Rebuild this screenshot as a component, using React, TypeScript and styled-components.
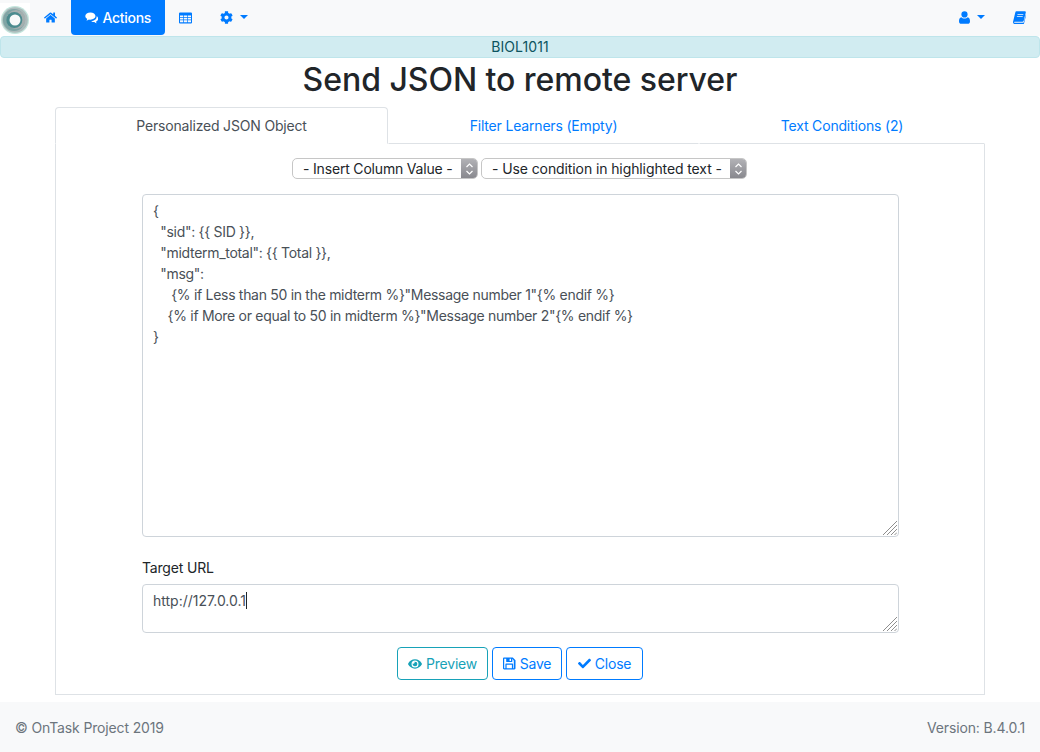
import styled, { createGlobalStyle } from 'styled-components';
import { FaHome, FaCog, FaEye, FaCheck } from 'react-icons/fa';

const JSON_TEXT = `{
  "sid": {{ SID }},
  "midterm_total": {{ Total }},
  "msg":
     {% if Less than 50 in the midterm %}"Message number 1"{% endif %}
    {% if More or equal to 50 in midterm %}"Message number 2"{% endif %}
}`;

const GlobalStyle = createGlobalStyle`
  * { box-sizing: border-box; }
  html, body { margin: 0; padding: 0; background: #fff; }
  body {
    font-family: Inter, "Liberation Sans", sans-serif;
    font-size: 14px;
    letter-spacing: -0.18px;
    color: #212529;
    width: 1040px;
    height: 752px;
    overflow: hidden;
  }
`;

const Logo = () => (
  <LogoBox>
    <svg width="30" height="30" viewBox="0 0 30 30">
      <circle cx="15" cy="15" r="14" fill="#c4e5dd" />
      <circle cx="15" cy="15" r="12.800" fill="#adbcbc" />
      <circle cx="14" cy="15" r="11" fill="#7fa5a5" />
      <circle cx="16" cy="14.500" r="9.500" fill="#a5afaf" />
      <circle cx="14.300" cy="15" r="8" fill="#4a8b8e" />
      <circle cx="15" cy="15" r="5.500" fill="#f7f9f9" />
    </svg>
  </LogoBox>
);

const CommentsIcon = () => (
  <svg width="14" height="13" viewBox="0 0 14 13" fill="currentColor">
    <path d="M5.600 1.200C2.600 1.200.3 2.900.3 5c0 1.200.8 2.300 2 3-.2.7-.6 1.300-1 1.700 1 0 2-.5 2.800-1.100.5.1 1 .2 1.500.2 3 0 5.300-1.700 5.300-3.800S8.600 1.200 5.600 1.200z" />
    <path d="M12 4.800c.1.300.1.500.1.800 0 2.500-2.600 4.400-5.700 4.500.9.900 2.200 1.200 3.300 1.200.4.500 1.400 1 2.400 1.100-.3-.4-.6-.9-.7-1.500 1.600-.9 2.300-1.900 2.300-3.100 0-1.200-.7-2.200-1.700-2.800z" />
  </svg>
);

const TableIcon = () => (
  <svg width="13" height="12" viewBox="0 0 13 12" fill="currentColor">
    <path
      fillRule="evenodd"
      d="M1 .5h11a1 1 0 0 1 1 1v9a1 1 0 0 1-1 1H1a1 1 0 0 1-1-1v-9a1 1 0 0 1 1-1zM1 3.500v1.700h3.200V3.500zM4.900 3.500v1.700h3.200V3.500zM8.800 3.500v1.700H12V3.500zM1 5.900v1.700h3.200V5.900zM4.900 5.900v1.700h3.200V5.900zM8.800 5.900v1.700H12V5.900zM1 8.300v1.900h3.200V8.300zM4.900 8.300v1.900h3.200V8.300zM8.800 8.300v1.900H12V8.300z"
    />
  </svg>
);

const UserIcon = () => (
  <svg width="11" height="13" viewBox="0 0 11 13" fill="currentColor">
    <circle cx="5.500" cy="3.400" r="3.100" />
    <path d="M2.300 6.200C3 7 4.200 7.500 5.500 7.500s2.500-.5 3.200-1.300C10.200 6.500 11 7.800 11 10.200 11 12 10 12.800 8.800 12.800H2.200C1 12.800 0 12 0 10.200 0 7.800.8 6.500 2.300 6.200z" />
  </svg>
);

const BookIcon = () => (
  <svg width="13" height="13" viewBox="0 0 13 13" fill="currentColor">
    <path
      fillRule="evenodd"
      d="M3.400.3h8.500c.8 0 1.100.6.900 1.300l-2.100 8.200c-.2.7-.7 1-1.400 1H1.600c-.4 0-.6.200-.6.400 0 .3.300.5.700.5h8.500c.3 0 .5-.1.600-.4l2-7.700c.2.2.3.5.2.9l-2 7.900c-.1.5-.6 1-1.200 1H1.800C.8 13 0 12.200 0 11.200c0-.2 0-.4.100-.6L2.300 1.400C2.500.7 2.800.3 3.400.3zM4.600 3l-.2.8h5.800l.2-.8zM4 5.200l-.2.8h5.800l.2-.8z"
    />
  </svg>
);

const SaveIcon = () => (
  <svg width="13" height="13" viewBox="0 0 13 13" fill="currentColor">
    <path
      fillRule="evenodd"
      d="M1.200.5h8.600L12.500 3.200v8.100c0 .7-.5 1.200-1.200 1.200H1.200C.5 12.500 0 12 0 11.300V1.700C0 1 .5.500 1.200.5zM1.200 1.700v9.600h1.200V7.200c0-.4.200-.6.600-.6h6.500c.4 0 .6.200.6.600v4.100h.7V3.700L9.300 1.700V4.500c0 .4-.2.600-.6.600H3.800c-.4 0-.6-.2-.6-.6V1.700zM3.600 7.800v3.500h5.300V7.800zM6.600 1.800v2.300h1.400V1.800z"
    />
  </svg>
);

const Stepper = () => (
  <StepperBox>
    <svg width="9" height="14" viewBox="0 0 9 14" fill="none" stroke="#fff" strokeWidth="1.200">
      <path d="M1.500 5 L4.500 2 L7.500 5" />
      <path d="M1.500 9 L4.500 12 L7.500 9" />
    </svg>
  </StepperBox>
);

const Grip = () => (
  <GripMark>
    <svg width="14" height="14" viewBox="0 0 14 14" stroke="#8e8e8e" strokeWidth="1">
      <path d="M0 14 L14 0" />
      <path d="M4 14 L14 4" />
      <path d="M8 14 L14 8" />
      <path d="M11.500 14 L14 11.500" />
    </svg>
  </GripMark>
);

export default function App() {
  return (
    <Page>
      <GlobalStyle />
      <Navbar>
        <Logo />
        <NavLink><FaHome size={13} /></NavLink>
        <ActiveLink><CommentsIcon /> Actions</ActiveLink>
        <NavLink><TableIcon /></NavLink>
        <NavLink><FaCog size={13} /><Caret /></NavLink>
        <NavSpacer />
        <NavLink><UserIcon /><Caret /></NavLink>
        <NavLink><BookIcon /></NavLink>
      </Navbar>
      <Banner>BIOL1011</Banner>
      <Title>Send JSON to remote server</Title>
      <Content>
        <Tabs>
          <Tab $active>Personalized JSON Object</Tab>
          <Tab>Filter Learners (Empty)</Tab>
          <Tab>Text Conditions (2)</Tab>
        </Tabs>
        <Panel>
          <SelectRow>
            <Select>- Insert Column Value -<Stepper /></Select>
            <WideSelect>- Use condition in highlighted text -<Stepper /></WideSelect>
          </SelectRow>
          <TextBox $height={343}>
            <JsonArea readOnly value={JSON_TEXT} />
            <Grip />
          </TextBox>
          <FieldLabel>Target URL</FieldLabel>
          <TextBox $height={49}>
            <UrlArea readOnly value="http://127.0.0.1" />
            <TextCursor />
            <Grip />
          </TextBox>
          <Buttons>
            <OutlineButton $color="#17a2b8" $width={91}><FaEye size={14} /> Preview</OutlineButton>
            <OutlineButton $color="#007bff" $width={70}><SaveIcon /> Save</OutlineButton>
            <OutlineButton $color="#007bff" $width={77}><FaCheck size={13} /> Close</OutlineButton>
          </Buttons>
        </Panel>
      </Content>
      <Footer>
        <span>© OnTask Project 2019</span>
        <span>Version: B.4.0.1</span>
      </Footer>
    </Page>
  );
}

const Page = styled.div`
  display: flex;
  flex-direction: column;
  height: 752px;
`;

const Navbar = styled.nav`
  display: flex;
  align-items: stretch;
  height: 36px;
  background: #f8f9fa;
`;

const LogoBox = styled.div`
  width: 30px;
  height: 33px;
  background: #fff;
  display: flex;
  align-items: center;
  justify-content: center;
  margin-top: 3px;
`;

const NavLink = styled.a`
  display: flex;
  align-items: center;
  gap: 4px;
  padding: 0 14px;
  height: 35px;
  font-size: 14px;
  font-weight: 500;
  letter-spacing: -0.3px;
  color: #007bff;
  border-radius: 0 0 4px 4px;
`;

const ActiveLink = styled(NavLink)`
  width: 94px;
  color: #fff;
  background: #007bff;
`;

const Caret = styled.span`
  width: 0;
  height: 0;
  margin-left: 3px;
  margin-top: -2px;
  border-top: 4px solid #007bff;
  border-left: 4px solid transparent;
  border-right: 4px solid transparent;
`;

const NavSpacer = styled.div`
  flex: 1;
`;

const Banner = styled.div`
  height: 22px;
  background: #d1ecf1;
  border: 1px solid #bee5eb;
  border-radius: 4px;
  color: #0c5460;
  text-align: center;
  font-size: 14px;
  letter-spacing: 0.1px;
  line-height: 20px;
`;

const Title = styled.h1`
  margin: 0;
  height: 49px;
  font-size: 32px;
  letter-spacing: -0.04px;
  line-height: 44px;
  font-weight: 500;
  text-align: center;
  color: #212529;
`;

const Content = styled.div`
  margin: 0 55px;
  display: flex;
  flex-direction: column;
`;

const Tabs = styled.div`
  display: grid;
  grid-template-columns: 333px 311px 1fr;
  height: 37px;
`;

const Tab = styled.div<{ $active?: boolean }>`
  display: flex;
  align-items: center;
  justify-content: center;
  font-size: 14px;
  color: ${({ $active }) => ($active ? '#495057' : '#007bff')};
  border: 1px solid ${({ $active }) => ($active ? '#dee2e6' : 'transparent')};
  border-bottom: 1px solid ${({ $active }) => ($active ? '#fff' : '#dee2e6')};
  border-radius: 4px 4px 0 0;
`;

const Panel = styled.div`
  height: 551px;
  border: 1px solid #dee2e6;
  border-top: none;
  padding: 14px 85px 0 86px;
  display: flex;
  flex-direction: column;
  align-items: stretch;
`;

const SelectRow = styled.div`
  display: flex;
  justify-content: center;
  gap: 3px;
  height: 21px;
  margin: 0 2px 15px 0;
`;

const Select = styled.div`
  display: flex;
  align-items: center;
  justify-content: space-between;
  width: 186px;
  height: 21px;
  padding-left: 10px;
  font-size: 14px;
  color: #212529;
  background: #fff;
  border: 1px solid #c6c6c6;
  border-radius: 5px;
  overflow: hidden;
`;

const WideSelect = styled(Select)`
  width: 266px;
  letter-spacing: -0.1px;
`;

const StepperBox = styled.div`
  width: 16px;
  height: 21px;
  display: flex;
  align-items: center;
  justify-content: center;
  background: linear-gradient(#b4b4b8, #86868c);
`;

const TextBox = styled.div<{ $height: number }>`
  position: relative;
  height: ${({ $height }) => $height}px;
`;

const JsonArea = styled.textarea`
  display: block;
  width: 100%;
  height: 100%;
  padding: 5px 10px;
  font-family: inherit;
  font-size: 14px;
  letter-spacing: -0.3px;
  line-height: 21px;
  color: #495057;
  background: #fff;
  border: 1px solid #ced4da;
  border-radius: 4px;
  outline: none;
  resize: none;
`;

const UrlArea = styled(JsonArea)`
  letter-spacing: 0;
`;

const GripMark = styled.span`
  position: absolute;
  right: 2px;
  bottom: 2px;
  width: 14px;
  height: 14px;
  line-height: 0;
`;

const FieldLabel = styled.label`
  display: block;
  margin-top: 21px;
  height: 26px;
  font-size: 14px;
  line-height: 20px;
  color: #212529;
`;

const TextCursor = styled.span`
  position: absolute;
  left: 104px;
  top: 8px;
  width: 1px;
  height: 17px;
  background: #212529;
`;

const Buttons = styled.div`
  display: flex;
  justify-content: center;
  gap: 4px;
  margin: 14px 1px 0 0;
`;

const OutlineButton = styled.button<{ $color: string; $width: number }>`
  display: inline-flex;
  align-items: center;
  justify-content: center;
  gap: 4px;
  width: ${({ $width }) => $width}px;
  height: 33px;
  padding: 0;
  font-family: inherit;
  font-size: 14px;
  letter-spacing: inherit;
  color: ${({ $color }) => $color};
  background: #fff;
  border: 1px solid ${({ $color }) => $color};
  border-radius: 4px;
`;

const Footer = styled.footer`
  margin-top: 7px;
  flex: 1;
  display: flex;
  align-items: center;
  justify-content: space-between;
  padding: 0 15px;
  background: #f8f9fa;
  font-size: 14px;
  letter-spacing: -0.14px;
  color: #6c757d;
`;
